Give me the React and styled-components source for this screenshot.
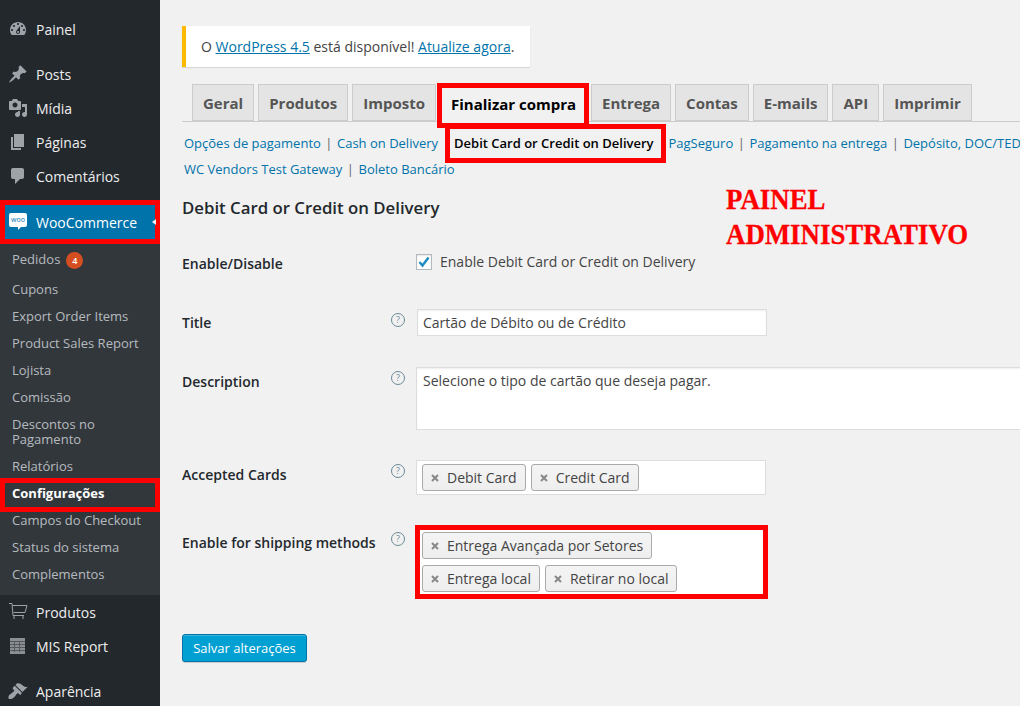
import React from 'react';
import styled, { createGlobalStyle } from 'styled-components';

const GlobalStyle = createGlobalStyle`
	html, body {
		margin: 0;
		padding: 0;
		height: 706px;
		overflow: hidden;
		background: #f1f1f1;
	}
	* {
		box-sizing: border-box;
	}
`;

const Page = styled.div`
	display: flex;
	width: 1020px;
	height: 706px;
	overflow: hidden;
	font-family: 'Open Sans', sans-serif;
	font-size: 14px;
	color: #444;
`;

const Sidebar = styled.nav`
	flex: 0 0 160px;
	height: 706px;
	background: #23282d;
	padding-top: 12px;
	overflow: hidden;
`;

const MenuItem = styled.div`
	display: flex;
	align-items: center;
	height: 34px;
	margin-bottom: ${(p) => p.$after || 0}px;
	padding-left: 8px;
	color: #eee;
	font-size: 14px;
`;

const MenuIcon = styled.svg`
	flex: 0 0 20px;
	width: 20px;
	height: 20px;
	margin-right: 8px;
	fill: #9ea3a8;
`;

const WooItem = styled.div`
	position: relative;
	display: flex;
	align-items: center;
	height: 34px;
	margin: 0 5px;
	padding-left: 4px;
	background: #0073aa;
	color: #fff;
	outline: 5px solid #ff0000;
`;

const WooLogo = styled.span`
	position: relative;
	display: block;
	width: 18px;
	height: 14px;
	margin: 0 9px 5px 0;
	background: #fff;
	border-radius: 2px;
	color: #0073aa;
	font-size: 7px;
	line-height: 13px;
	text-align: center;
	&::after {
		content: '';
		position: absolute;
		left: 9px;
		top: 14px;
		border-style: solid;
		border-width: 3px 3px 0 0;
		border-color: #fff transparent transparent transparent;
	}
`;

const WooArrow = styled.span`
	position: absolute;
	right: -1px;
	top: 14px;
	border-style: solid;
	border-width: 3px 4px 3px 0;
	border-color: transparent #f1f1f1 transparent transparent;
`;

const Submenu = styled.div`
	background: #32373c;
	padding: 7px 0;
`;

const SubItem = styled.div`
	padding: 6px 5px 6px 12px;
	margin-bottom: ${(p) => p.$after || 0}px;
	color: rgba(240, 245, 250, 0.7);
	font-size: 13px;
	line-height: 15px;
`;

const MarkedSubItem = styled.div`
	height: 24px;
	margin: 3px 5px 0;
	padding: 3px 0 0 7px;
	color: #fff;
	font-size: 13px;
	font-weight: 700;
	line-height: 15px;
	outline: 5px solid #ff0000;
`;

const Badge = styled.span`
	display: inline-block;
	width: 17px;
	height: 17px;
	margin-left: 6px;
	border-radius: 50%;
	background: #d54e21;
	color: #fff;
	font-size: 9px;
	font-weight: 600;
	line-height: 17px;
	text-align: center;
	vertical-align: top;
`;

const Main = styled.main`
	position: relative;
	flex: 1;
	min-width: 0;
	padding: 26px 0 0 22px;
	overflow: hidden;
`;

const Notice = styled.div`
	display: inline-block;
	height: 41px;
	padding: 0 16px 0 15px;
	background: #fff;
	border-left: 4px solid #ffb900;
	box-shadow: 0 1px 1px rgba(0, 0, 0, 0.1);
	font-size: 14px;
	line-height: 41px;
`;

const InlineLink = styled.a`
	color: #0073aa;
	text-decoration: underline;
`;

const TabBar = styled.div`
	display: flex;
	align-items: flex-start;
	gap: 4px;
	height: 38px;
	margin: 17px 0 0;
	padding-left: 10px;
	border-bottom: 1px solid #ccc;
	white-space: nowrap;
`;

const Tab = styled.div`
	height: 37px;
	padding: 0 10px;
	background: #e4e4e4;
	border: 1px solid #ccc;
	color: #555;
	font-size: 15px;
	font-weight: 700;
	line-height: 36px;
`;

const ActiveTab = styled.div`
	height: 35px;
	margin: 4px 3px 0 2px;
	padding: 0 8px 0 9px;
	background: #f1f1f1;
	outline: 5px solid #ff0000;
	color: #000;
	font-size: 15px;
	font-weight: 700;
	line-height: 32px;
`;

const SubNav = styled.div`
	display: flex;
	align-items: center;
	height: 26px;
	margin-top: ${(p) => p.$top || 0}px;
	padding-left: 2px;
	color: #666;
	font-size: 13px;
	white-space: nowrap;
`;

const SubLink = styled.a`
	color: #0073aa;
`;

const Pipe = styled.span`
	margin: 0 4.5px;
	color: #666;
`;

const CurrentLink = styled.span`
	flex: none;
	height: 29px;
	margin: 0 7.5px 0 12px;
	padding: 0 7.5px 0 4px;
	color: #000;
	font-weight: 600;
	line-height: 28px;
	outline: 5px solid #ff0000;
`;

const SectionTitle = styled.h2`
	margin: 14px 0 0;
	color: #23282d;
	font-size: 16.8px;
	font-weight: 600;
	line-height: 24px;
`;

const Row = styled.div`
	display: grid;
	grid-template-columns: 209px 25px 1fr;
	margin-top: ${(p) => p.$top}px;
`;

const Label = styled.div`
	padding-top: ${(p) => p.$pad || 0}px;
	color: #23282d;
	font-size: 14px;
	font-weight: 600;
	line-height: 20px;
`;

const HelpIcon = styled.span`
	display: block;
	width: 14px;
	height: 14px;
	margin-top: ${(p) => p.$pad || 0}px;
	border: 1px solid #6b8a96;
	border-radius: 50%;
	color: #6b8a96;
	font-size: 9px;
	line-height: 12px;
	text-align: center;
`;

const CheckField = styled.label`
	display: flex;
	align-items: center;
	gap: 8px;
	font-size: 14px;
	line-height: 20px;
`;

const CheckBox = styled.span`
	display: flex;
	align-items: center;
	justify-content: center;
	width: 16px;
	height: 16px;
	background: #fff;
	border: 1px solid #b4b9be;
	box-shadow: inset 0 1px 2px rgba(0, 0, 0, 0.1);
`;

const TextInput = styled.div`
	width: 350px;
	height: 27px;
	margin-left: 1px;
	padding-left: 5px;
	background: #fff;
	border: 1px solid #ddd;
	box-shadow: inset 0 1px 2px rgba(0, 0, 0, 0.07);
	font-size: 14px;
	line-height: 25px;
`;

const TextArea = styled(TextInput)`
	width: 640px;
	height: 63px;
	margin-left: 0;
	padding-left: 6px;
`;

const TagBox = styled.div`
	display: flex;
	flex-wrap: wrap;
	align-content: flex-start;
	gap: 6px 5px;
	width: 350px;
	padding: 3px 5px;
	background: #fff;
	border: 1px solid #ddd;
`;

const MarkedTagBox = styled(TagBox)`
	width: 343px;
	height: 64px;
	margin: 5px 0 0 4px;
	padding: 2px;
	border: 0;
	outline: 5px solid #ff0000;
`;

const Tag = styled.span`
	display: flex;
	align-items: center;
	height: 27px;
	padding: 0 8px;
	background: linear-gradient(#f4f4f4, #eee);
	border: 1px solid #aaa;
	border-radius: 3px;
	font-size: 14px;
`;

const TagX = styled.svg`
	flex: none;
	width: 8px;
	height: 8px;
	margin-right: 8px;
`;

const SaveButton = styled.button`
	display: block;
	width: 125px;
	height: 28px;
	margin-top: 40px;
	padding: 0;
	background: #00a0d2;
	border: 1px solid #0073aa;
	border-radius: 3px;
	box-shadow: inset 0 1px 0 rgba(120, 200, 230, 0.5), 0 1px 0 rgba(0, 0, 0, 0.15);
	color: #fff;
	font-family: inherit;
	font-size: 13px;
`;

const Annotation = styled.div`
	position: absolute;
	left: 566px;
	top: 181px;
	color: #ff0000;
	font-family: 'Liberation Serif', serif;
	font-size: 30px;
	font-weight: 700;
	line-height: 35px;
	white-space: nowrap;
	transform: scaleX(0.895);
	transform-origin: left top;
	-webkit-text-stroke: 0.3px #ff0000;
`;

const icons = {
	dashboard:
		'M3.76 16h12.48c1.1-1.37 1.76-3.11 1.76-5 0-4.42-3.58-8-8-8s-8 3.58-8 8c0 1.89.66 3.63 1.76 5zM10 4c.55 0 1 .45 1 1s-.45 1-1 1-1-.45-1-1 .45-1 1-1zM6 6c.55 0 1 .45 1 1s-.45 1-1 1-1-.45-1-1 .45-1 1-1zm8 0c.55 0 1 .45 1 1s-.45 1-1 1-1-.45-1-1 .45-1 1-1zm-5.37 5.55L12 7v6c0 1.1-.9 2-2 2s-2-.9-2-2c0-.57.24-1.08.63-1.45zM4 10c.55 0 1 .45 1 1s-.45 1-1 1-1-.45-1-1 .45-1 1-1zm12 0c.55 0 1 .45 1 1s-.45 1-1 1-1-.45-1-1 .45-1 1-1zm-5 3c0-.55-.45-1-1-1s-1 .45-1 1 .45 1 1 1 1-.45 1-1z',
	pin: 'M10.44 3.02l1.82-1.82 6.36 6.35-1.83 1.82c-1.05-.68-2.48-.57-3.41.36l-.75.75c-.92.93-1.04 2.35-.35 3.41l-1.83 1.82-2.41-2.41-2.8 2.79c-.42.42-3.38 2.71-3.8 2.29s1.86-3.39 2.28-3.81l2.79-2.79L4.1 9.36l1.83-1.82c1.05.69 2.48.57 3.4-.36l.75-.75c.93-.92 1.05-2.35.36-3.41z',
	media:
		'M13 11V4c0-.55-.45-1-1-1h-1.67L9 1H5L3.67 3H2c-.55 0-1 .45-1 1v7c0 .55.45 1 1 1h10c.55 0 1-.45 1-1zM7 4.5c1.38 0 2.5 1.12 2.5 2.5S8.38 9.5 7 9.5 4.5 8.38 4.5 7 5.62 4.5 7 4.5zM14 6h5v10.5c0 1.38-1.12 2.5-2.5 2.5S14 17.88 14 16.5s1.12-2.5 2.5-2.5c.17 0 .34.02.5.05V9h-3V6zm-4 8.05V13h2v3.5c0 1.38-1.12 2.5-2.5 2.5S7 17.88 7 16.5 8.12 14 9.5 14c.17 0 .34.02.5.05z',
	page: 'M6 15V2h10v13H6zm-1 1h8v2H3V5h2v11z',
	comment: 'M5 2h9c1.1 0 2 .9 2 2v7c0 1.1-.9 2-2 2h-2l-5 5v-5H5c-1.1 0-2-.9-2-2V4c0-1.1.9-2 2-2z',
	brush:
		'M14.48 11.06L7.41 3.99l1.5-1.5c.5-.56 2.3-.47 3.51.32 1.21.8 1.43 1.28 2.91 2.1 1.18.64 2.45 1.26 4.45.85zm-.71.71L6.7 4.7 4.93 6.47c-.39.39-.39 1.02 0 1.41l1.06 1.06c.39.39.39 1.03 0 1.42-.6.6-1.43 1.11-2.21 1.69-.35.26-.7.53-1.01.84C1.43 13.23.4 14.85.4 16.68c0 .83.63 1.4 1.42 1.4 1.84 0 3.45-1.02 4.79-2.35.31-.31.58-.66.85-1.02.57-.78 1.08-1.6 1.69-2.21.39-.39 1.02-.39 1.41 0l1.06 1.06c.39.39 1.02.39 1.41 0z',
};

const Icon = ({ name }) => (
	<MenuIcon viewBox='0 0 20 20'>
		<path fillRule='evenodd' d={icons[name]} />
	</MenuIcon>
);

const CartIcon = () => (
	<MenuIcon viewBox='0 0 20 20'>
		<path
			d='M1 1.5h3l1 12h11M4.5 3.5H19l-2 7H5.5M6 13.5v3.5M15 13.5v3.5'
			stroke='#9ea3a8'
			strokeWidth='1'
			fill='none'
		/>
	</MenuIcon>
);

const TableIcon = () => (
	<MenuIcon viewBox='0 0 20 20'>
		<rect x='2' y='2' width='15' height='16' fill='#8b8f94' />
		<path d='M2 5.5h15M2 8.5h15M2 11.5h15M2 14.5h15M6.5 5v11M11.5 5v11' stroke='#55595e' strokeWidth='1' fill='none' />
	</MenuIcon>
);

const subItems = [
	'Cupons',
	'Export Order Items',
	'Product Sales Report',
	'Lojista',
	'Comissão',
	'Descontos no Pagamento',
	'Relatórios',
];

const RemovableTag = ({ children }) => (
	<Tag>
		<TagX viewBox='0 0 8 8'>
			<path d='M1 1l6 6M7 1L1 7' stroke='#888' strokeWidth='2' />
		</TagX>
		{children}
	</Tag>
);

export default function App() {
	return (
		<>
			<GlobalStyle />
			<Page>
				<Sidebar>
					<MenuItem $after={11}>
						<Icon name='dashboard' />
						Painel
					</MenuItem>
					<MenuItem>
						<Icon name='pin' />
						Posts
					</MenuItem>
					<MenuItem>
						<Icon name='media' />
						Mídia
					</MenuItem>
					<MenuItem>
						<Icon name='page' />
						Páginas
					</MenuItem>
					<MenuItem $after={12}>
						<Icon name='comment' />
						Comentários
					</MenuItem>
					<WooItem>
						<WooLogo>woo</WooLogo>
						WooCommerce
						<WooArrow />
					</WooItem>
					<Submenu>
						<SubItem $after={1}>
							Pedidos
							<Badge>4</Badge>
						</SubItem>
						{subItems.map((item) => (
							<SubItem key={item}>{item}</SubItem>
						))}
						<MarkedSubItem>Configurações</MarkedSubItem>
						<SubItem>Campos do Checkout</SubItem>
						<SubItem>Status do sistema</SubItem>
						<SubItem>Complementos</SubItem>
					</Submenu>
					<MenuItem>
						<CartIcon />
						Produtos
					</MenuItem>
					<MenuItem $after={11}>
						<TableIcon />
						MIS Report
					</MenuItem>
					<MenuItem>
						<Icon name='brush' />
						Aparência
					</MenuItem>
				</Sidebar>
				<Main>
					<Notice>
						O <InlineLink>WordPress 4.5</InlineLink> está disponível!{' '}
						<InlineLink>Atualize agora</InlineLink>.
					</Notice>
					<TabBar>
						<Tab>Geral</Tab>
						<Tab>Produtos</Tab>
						<Tab>Imposto</Tab>
						<ActiveTab>Finalizar compra</ActiveTab>
						<Tab>Entrega</Tab>
						<Tab>Contas</Tab>
						<Tab>E-mails</Tab>
						<Tab>API</Tab>
						<Tab>Imprimir</Tab>
					</TabBar>
					<SubNav $top={8}>
						<SubLink>Opções de pagamento</SubLink>
						<Pipe>|</Pipe>
						<SubLink>Cash on Delivery</SubLink>
						<CurrentLink>Debit Card or Credit on Delivery</CurrentLink>
						<SubLink>PagSeguro</SubLink>
						<Pipe>|</Pipe>
						<SubLink>Pagamento na entrega</SubLink>
						<Pipe>|</Pipe>
						<SubLink>Depósito, DOC/TED</SubLink>
					</SubNav>
					<SubNav>
						<SubLink>WC Vendors Test Gateway</SubLink>
						<Pipe>|</Pipe>
						<SubLink>Boleto Bancário</SubLink>
					</SubNav>
					<SectionTitle>Debit Card or Credit on Delivery</SectionTitle>
					<Row $top={29}>
						<Label $pad={5}>Enable/Disable</Label>
						<span />
						<CheckField>
							<CheckBox>
								<svg width='14' height='14' viewBox='0 0 14 14'>
									<path d='M2.5 7l3 3.5L11.5 2.5' fill='none' stroke='#1e8cbe' strokeWidth='2.4' />
								</svg>
							</CheckBox>
							Enable Debit Card or Credit on Delivery
						</CheckField>
					</Row>
					<Row $top={35}>
						<Label $pad={4}>Title</Label>
						<HelpIcon $pad={4}>?</HelpIcon>
						<TextInput>Cartão de Débito ou de Crédito</TextInput>
					</Row>
					<Row $top={31}>
						<Label $pad={5}>Description</Label>
						<HelpIcon $pad={4}>?</HelpIcon>
						<TextArea>Selecione o tipo de cartão que deseja pagar.</TextArea>
					</Row>
					<Row $top={30}>
						<Label $pad={5}>Accepted Cards</Label>
						<HelpIcon $pad={4}>?</HelpIcon>
						<TagBox>
							<RemovableTag>Debit Card</RemovableTag>
							<RemovableTag>Credit Card</RemovableTag>
						</TagBox>
					</Row>
					<Row $top={30}>
						<Label $pad={8}>Enable for shipping methods</Label>
						<HelpIcon $pad={7}>?</HelpIcon>
						<MarkedTagBox>
							<RemovableTag>Entrega Avançada por Setores</RemovableTag>
							<RemovableTag>Entrega local</RemovableTag>
							<RemovableTag>Retirar no local</RemovableTag>
						</MarkedTagBox>
					</Row>
					<SaveButton>Salvar alterações</SaveButton>
					<Annotation>
						PAINEL
						<br />
						ADMINISTRATIVO
					</Annotation>
				</Main>
			</Page>
		</>
	);
}
